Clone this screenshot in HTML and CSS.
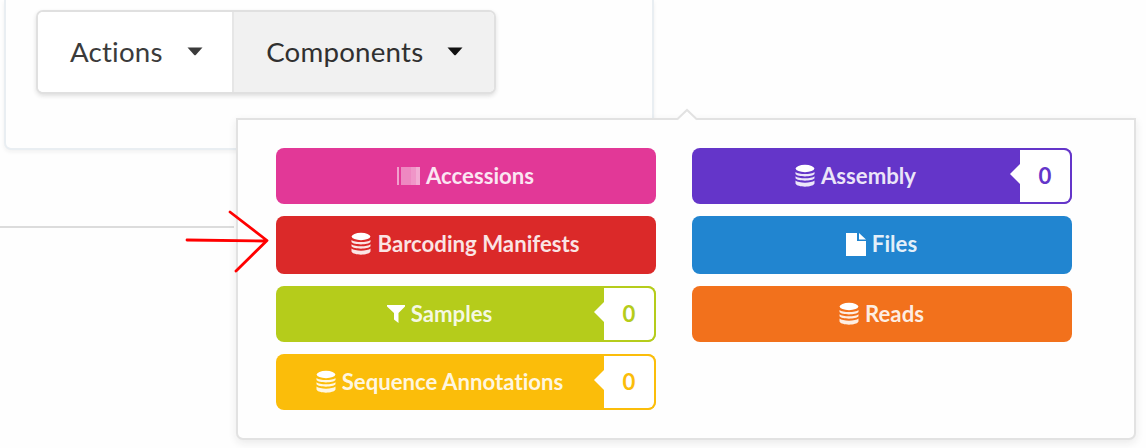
FILE: index.html
```html
<!DOCTYPE html>
<html lang="en">
<head>
<meta charset="utf-8">
<title>Components</title>
<link rel="stylesheet" href="styles.css">
</head>
<body>
<svg class="defs" aria-hidden="true">
  <symbol id="database" viewBox="0 0 20 24">
    <ellipse cx="10" cy="4.500" rx="9.300" ry="3.700" fill="#fff"/>
    <path d="M.5 8c3 2.700 16 2.700 19 0v2c-2 3.200-17 3.200-19 0zM.5 12.300c3 2.700 16 2.700 19 0v2c-2 3.200-17 3.200-19 0zM.5 16.600c3 2.700 16 2.700 19 0v3c-2 4.200-17 4.200-19 0z"/>
  </symbol>
  <symbol id="caret" viewBox="0 0 16 9"><path d="M.5.5h15L9 7.700q-1 1-2 0z"/></symbol>
</svg>
<main class="page">
  <section class="segment">
    <div class="menu">
      <button class="menu-item">Actions <svg class="caret"><use href="#caret"/></svg></button>
      <button class="menu-item active">Components <svg class="caret"><use href="#caret"/></svg></button>
    </div>
  </section>
  <hr class="divider">
</main>
<div class="popup">
  <svg class="popup-arrow" viewBox="0 0 22 14"><path class="arrow-fill" d="M1 12 11 2l10 10v2H1z"/><path class="arrow-line" d="M1 11.500 11 2l10 9.500"/></svg>
  <div class="column">
    <a class="button pink"><span class="content"><svg class="barcode" viewBox="0 0 23 18"><path opacity=".6" d="M0 0h2v18H0z"/><path opacity=".46" d="M4 0h10v18H4z"/><path opacity=".54" d="M14 0h5v18h-5z"/><path opacity=".66" d="M19 0h4v18h-4z"/></svg>Accessions</span></a>
    <a class="button red"><span class="content"><svg class="database"><use href="#database"/></svg>Barcoding Manifests</span></a>
    <a class="button olive"><span class="content"><svg class="filter" viewBox="0 0 18 18"><path d="M0 0h18v1.500L11.500 8v10L7 14.500V8L0 1.500z"/></svg>Samples</span><span class="count">0</span></a>
    <a class="button yellow"><span class="content"><svg class="database"><use href="#database"/></svg>Sequence Annotations</span><span class="count">0</span></a>
  </div>
  <div class="column">
    <a class="button violet"><span class="content"><svg class="database"><use href="#database"/></svg>Assembly</span><span class="count">0</span></a>
    <a class="button blue"><span class="content"><svg class="file" viewBox="0 0 20 23"><path d="M0 0h11v8h9v15H0zM13 0l7 6.500h-7z"/></svg>Files</span></a>
    <a class="button orange"><span class="content"><svg class="database"><use href="#database"/></svg>Reads</span></a>
  </div>
</div>
<svg class="pointer" viewBox="0 0 84 64"><path d="M2 31 81 32M45 3l37 28.500L51 62"/></svg>
</body>
</html>
```
FILE: styles.css
```css
* { box-sizing: border-box; }
body { margin: 0; width: 1146px; height: 448px; overflow: hidden; background: #fefefe; font-family: Lato, "Liberation Sans", sans-serif; font-variant-ligatures: none; }
svg { display: block; fill: currentColor; flex: none; }
.defs { position: absolute; width: 0; height: 0; }
.segment { width: 650px; height: 150px; margin-left: 4px; padding: 10px 0 0 32px; border: 2px solid #e9eef2; border-top: 0; border-radius: 0 0 7px 7px; background: #fefefe; box-shadow: 0 2px 4px rgba(34,36,38,.06); }
.menu { display: flex; width: 460px; height: 84px; margin-left: -2px; border: 2px solid #e0e0e0; border-radius: 7px; background: #fff; box-shadow: 0 2px 4px rgba(34,36,38,.14); overflow: hidden; }
.menu-item { display: flex; align-items: center; justify-content: space-between; width: 195px; padding: 0 29px 2px 32px; border: 0; background: #fff; color: #3b3b3b; font: 27.700px Lato, sans-serif; font-variant-ligatures: none; letter-spacing: .2px; white-space: nowrap; }
.menu-item.active { width: 263px; padding-right: 31px; border-left: 2px solid #e6e6e6; background: #f1f1f1; color: #303030; }
.caret { width: 16px; height: 9px; }
.active .caret { color: #111; }
.divider { width: 234px; height: 2px; margin: 76px 0 0; border: 0; background: #dcdcdc; }
.popup { position: absolute; left: 236px; top: 118px; width: 900px; height: 322px; display: flex; gap: 36px; padding: 28px 38px; border: 2px solid #e2e2e2; border-radius: 0 0 7px 7px; background: #fefefe; box-shadow: 0 3px 8px rgba(34,36,38,.09); }
.popup-arrow { position: absolute; left: 438px; top: -12px; width: 22px; height: 14px; }
.arrow-fill { fill: #fefefe; }
.arrow-line { fill: none; stroke: #e2e2e2; stroke-width: 2; }
.column { display: grid; grid-template-rows: 56px 58px 56px 56px; row-gap: 12px; width: 380px; }
.button { display: flex; border-radius: 8px; color: #fff; font-size: 22.200px; font-weight: 700; line-height: 24px; overflow: hidden; }
.content { flex: 1; display: flex; align-items: center; justify-content: center; gap: 6px; padding-right: 1px; color: rgba(255,255,255,.88); white-space: nowrap; }
.red .content, .blue .content { padding-bottom: 2px; }
.count { position: relative; display: flex; align-items: center; justify-content: center; width: 52px; border: 2px solid var(--tone); border-left: 0; border-radius: 0 8px 8px 0; background: #fff; color: var(--tone); }
.count::before { content: ""; position: absolute; left: -10px; top: 14px; border: solid transparent; border-width: 10px 10px 10px 0; border-right-color: #fff; }
.database { width: 20px; height: 24px; }
.barcode { width: 23px; height: 18px; }
.filter { width: 18px; height: 18px; color: #fff; }
.file { width: 20px; height: 23px; color: #fff; }
.pink { background: #e23897; }
.red { background: #db2929; }
.olive { --tone: #b5cc1b; background: #b5cc1b; }
.yellow { --tone: #fbbd0a; background: #fbbd0a; }
.violet { --tone: #6435c9; background: #6435c9; }
.blue { background: #2185d0; }
.orange { background: #f2711c; }
.pointer { position: absolute; left: 185px; top: 209px; width: 84px; height: 64px; fill: none; stroke: #f00; stroke-width: 2.800; stroke-linecap: round; stroke-linejoin: round; }
```
